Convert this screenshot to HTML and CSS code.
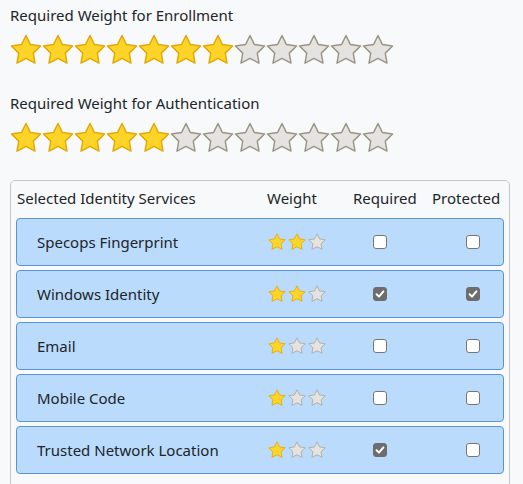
FILE: index.html
```html
<!DOCTYPE html>
<html>
<head>
<meta charset="utf-8">
<link rel="stylesheet" href="styles.css">
</head>
<body>
<svg width="0" height="0" class="defs">
  <defs>
    <polygon id="star" points="12,2 15.09,8.26 22,9.27 17,14.14 18.18,21.02 12,17.77 5.82,21.02 7,14.14 2,9.27 8.91,8.26"/>
  </defs>
</svg>

<div class="label label-first">Required Weight for Enrollment</div>
<div class="big-stars">
  <svg class="big on" viewBox="1 1 22 22"><use href="#star"/></svg>
  <svg class="big on" viewBox="1 1 22 22"><use href="#star"/></svg>
  <svg class="big on" viewBox="1 1 22 22"><use href="#star"/></svg>
  <svg class="big on" viewBox="1 1 22 22"><use href="#star"/></svg>
  <svg class="big on" viewBox="1 1 22 22"><use href="#star"/></svg>
  <svg class="big on" viewBox="1 1 22 22"><use href="#star"/></svg>
  <svg class="big on" viewBox="1 1 22 22"><use href="#star"/></svg>
  <svg class="big off" viewBox="1 1 22 22"><use href="#star"/></svg>
  <svg class="big off" viewBox="1 1 22 22"><use href="#star"/></svg>
  <svg class="big off" viewBox="1 1 22 22"><use href="#star"/></svg>
  <svg class="big off" viewBox="1 1 22 22"><use href="#star"/></svg>
  <svg class="big off" viewBox="1 1 22 22"><use href="#star"/></svg>
</div>

<div class="label label-second">Required Weight for Authentication</div>
<div class="big-stars">
  <svg class="big on" viewBox="1 1 22 22"><use href="#star"/></svg>
  <svg class="big on" viewBox="1 1 22 22"><use href="#star"/></svg>
  <svg class="big on" viewBox="1 1 22 22"><use href="#star"/></svg>
  <svg class="big on" viewBox="1 1 22 22"><use href="#star"/></svg>
  <svg class="big on" viewBox="1 1 22 22"><use href="#star"/></svg>
  <svg class="big off" viewBox="1 1 22 22"><use href="#star"/></svg>
  <svg class="big off" viewBox="1 1 22 22"><use href="#star"/></svg>
  <svg class="big off" viewBox="1 1 22 22"><use href="#star"/></svg>
  <svg class="big off" viewBox="1 1 22 22"><use href="#star"/></svg>
  <svg class="big off" viewBox="1 1 22 22"><use href="#star"/></svg>
  <svg class="big off" viewBox="1 1 22 22"><use href="#star"/></svg>
  <svg class="big off" viewBox="1 1 22 22"><use href="#star"/></svg>
</div>

<div class="panel">
  <div class="grid head">
    <div class="h-name">Selected Identity Services</div>
    <div class="h-weight">Weight</div>
    <div class="h-req">Required</div>
    <div class="h-prot">Protected</div>
  </div>

  <div class="grid row">
    <div class="name">Specops Fingerprint</div>
    <div class="small-stars">
      <svg class="small on" viewBox="1 1 22 22"><use href="#star"/></svg>
      <svg class="small on" viewBox="1 1 22 22"><use href="#star"/></svg>
      <svg class="small off" viewBox="1 1 22 22"><use href="#star"/></svg>
    </div>
    <div class="c-req"><span class="cb"></span></div>
    <div class="c-prot"><span class="cb"></span></div>
  </div>

  <div class="grid row">
    <div class="name">Windows Identity</div>
    <div class="small-stars">
      <svg class="small on" viewBox="1 1 22 22"><use href="#star"/></svg>
      <svg class="small on" viewBox="1 1 22 22"><use href="#star"/></svg>
      <svg class="small off" viewBox="1 1 22 22"><use href="#star"/></svg>
    </div>
    <div class="c-req"><span class="cb checked"><svg viewBox="0 0 12 12"><path d="M2.6 6.3 L5 8.6 L9.4 3.4"/></svg></span></div>
    <div class="c-prot"><span class="cb checked"><svg viewBox="0 0 12 12"><path d="M2.6 6.3 L5 8.6 L9.4 3.4"/></svg></span></div>
  </div>

  <div class="grid row">
    <div class="name">Email</div>
    <div class="small-stars">
      <svg class="small on" viewBox="1 1 22 22"><use href="#star"/></svg>
      <svg class="small off" viewBox="1 1 22 22"><use href="#star"/></svg>
      <svg class="small off" viewBox="1 1 22 22"><use href="#star"/></svg>
    </div>
    <div class="c-req"><span class="cb"></span></div>
    <div class="c-prot"><span class="cb"></span></div>
  </div>

  <div class="grid row">
    <div class="name">Mobile Code</div>
    <div class="small-stars">
      <svg class="small on" viewBox="1 1 22 22"><use href="#star"/></svg>
      <svg class="small off" viewBox="1 1 22 22"><use href="#star"/></svg>
      <svg class="small off" viewBox="1 1 22 22"><use href="#star"/></svg>
    </div>
    <div class="c-req"><span class="cb"></span></div>
    <div class="c-prot"><span class="cb"></span></div>
  </div>

  <div class="grid row">
    <div class="name">Trusted Network Location</div>
    <div class="small-stars">
      <svg class="small on" viewBox="1 1 22 22"><use href="#star"/></svg>
      <svg class="small off" viewBox="1 1 22 22"><use href="#star"/></svg>
      <svg class="small off" viewBox="1 1 22 22"><use href="#star"/></svg>
    </div>
    <div class="c-req"><span class="cb checked"><svg viewBox="0 0 12 12"><path d="M2.6 6.3 L5 8.6 L9.4 3.4"/></svg></span></div>
    <div class="c-prot"><span class="cb"></span></div>
  </div>
</div>
</body>
</html>
```
FILE: styles.css
```css
html, body {
  margin: 0;
  padding: 0;
  background: #f8f9fa;
}
body {
  font-family: "Noto Sans", "Open Sans", sans-serif;
  font-size: 15px;
  color: #212529;
  padding: 0 10px;
  overflow: hidden;
}
.defs {
  position: absolute;
  width: 0;
  height: 0;
}
.label {
  line-height: 20px;
  height: 20px;
}
.label-first { padding-top: 5px; }
.label-second { margin-top: 27px; }

.big-stars {
  display: flex;
  margin-top: 9px;
  height: 32px;
}
svg.big {
  width: 32px;
  height: 32px;
  display: block;
  flex: none;
}
svg.big use, svg.small use {
  stroke-linejoin: round;
  stroke-width: 1;
}
svg.on use {
  fill: #fdd427;
  stroke: #e3a900;
}
svg.off use {
  fill: #e4e3df;
  stroke: #9a9484;
}
svg.small.off use { stroke: #aaa69c; }

.panel {
  margin-top: 26px;
  border: 1px solid #c6c7c9;
  border-radius: 5px;
  padding: 0 5px 20px;
  width: 488px;
}
.grid {
  display: grid;
  grid-template-columns: 248px 80px 80px 1fr;
  align-items: center;
}
.head {
  height: 34px;
  padding: 0 1px 3px;
}
.h-weight { padding-left: 2px; }
.h-req { padding-left: 8px; }
.h-prot { padding-left: 7px; }

.row {
  height: 46px;
  border: 1px solid #5b94d6;
  border-radius: 4px;
  background: #badbfc;
  margin-bottom: 4px;
}
.name { padding-left: 20px; }
.small-stars {
  display: flex;
  gap: 2px;
  padding-left: 3px;
}
svg.small {
  width: 18px;
  height: 18px;
  display: block;
}
.c-req { padding-left: 28px; }
.c-prot { padding-left: 41px; }
.cb {
  display: block;
  width: 12px;
  height: 12px;
  border: 1px solid #767676;
  border-radius: 3px;
  background: #fff;
}
.cb.checked {
  background: #6d6d6d;
  border-color: #6d6d6d;
}
.cb svg {
  display: block;
  width: 12px;
  height: 12px;
}
.cb svg path {
  fill: none;
  stroke: #fff;
  stroke-width: 2;
  stroke-linecap: round;
  stroke-linejoin: round;
}
```
